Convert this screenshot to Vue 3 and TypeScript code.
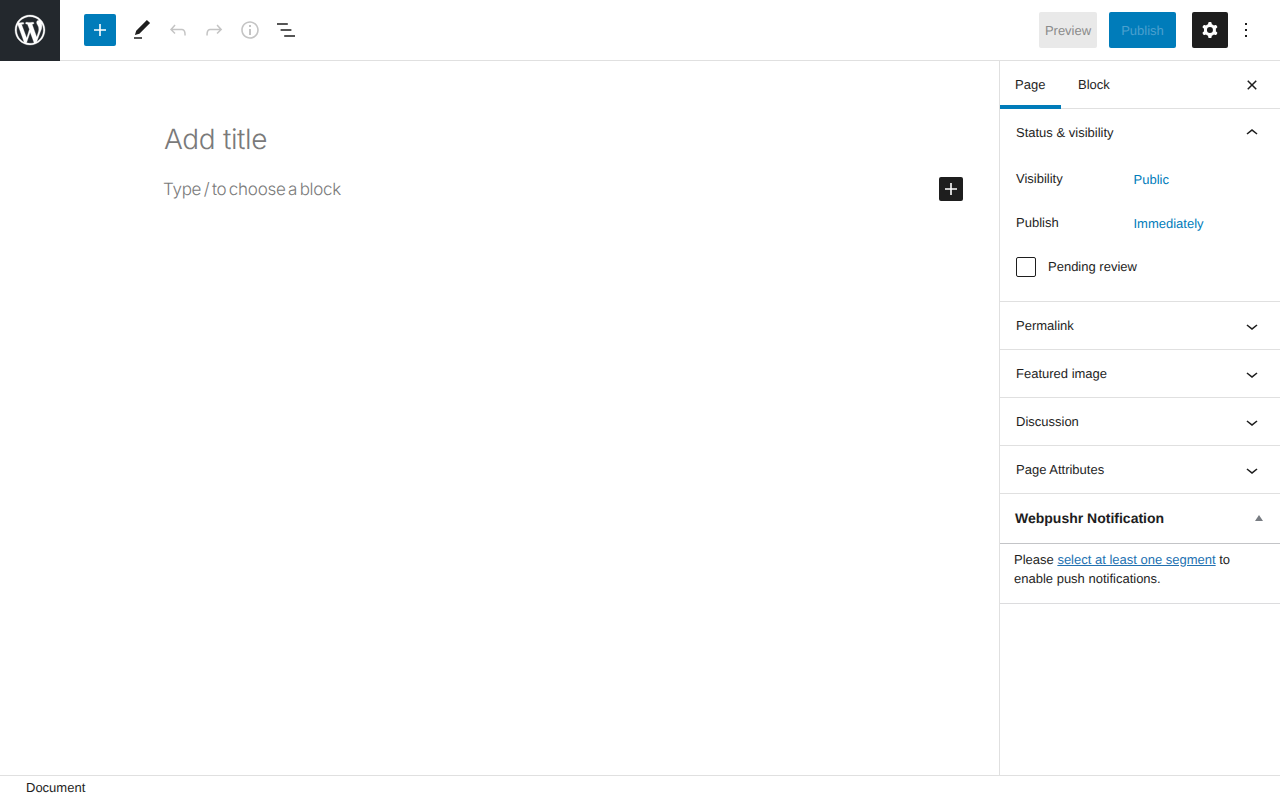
<script setup lang="ts">
const collapsed = ['Permalink', 'Featured image', 'Discussion', 'Page Attributes']
</script>

<template>
  <div class="page">
    <header class="topbar">
      <div class="logo">
        <svg width="36" height="36" viewBox="-2 -2 24 24" fill="#fff" stroke="#fff" stroke-width="0.2"><path d="M20 10c0-5.51-4.49-10-10-10C4.48 0 0 4.49 0 10c0 5.52 4.48 10 10 10 5.51 0 10-4.48 10-10zM7.78 15.37L4.37 6.22c.55-.02 1.17-.08 1.17-.08.5-.06.44-1.13-.06-1.11 0 0-1.45.11-2.37.11-.18 0-.37 0-.58-.01C4.12 2.69 6.87 1.11 10 1.11c2.33 0 4.45.87 6.05 2.34-.68-.11-1.65.39-1.65 1.58 0 .74.45 1.36.9 2.1.35.61.55 1.36.55 2.46 0 1.49-1.4 5-1.4 5l-3.03-8.37c.54-.02.82-.17.82-.17.5-.05.44-1.25-.06-1.22 0 0-1.44.12-2.38.12-.87 0-2.33-.12-2.33-.12-.5-.03-.56 1.2-.06 1.22l.92.08 1.26 3.41zM17.41 10c.24-.64.74-1.87.43-4.25.7 1.29 1.05 2.71 1.05 4.25 0 3.29-1.73 6.24-4.4 7.78.97-2.59 1.94-5.2 2.92-7.78zM6.1 18.09C3.12 16.65 1.11 13.53 1.11 10c0-1.3.23-2.48.72-3.59C3.25 10.3 4.67 14.2 6.1 18.09zm4.03-6.63l2.58 6.98c-.86.29-1.76.45-2.71.45-.79 0-1.57-.11-2.29-.33.81-2.38 1.62-4.74 2.42-7.1z"/></svg>
      </div>
      <div class="tools">
        <div class="add-btn">
          <svg width="24" height="24" viewBox="0 0 24 24" fill="#fff"><path d="M18 11.2h-5.2V6h-1.6v5.2H6v1.6h5.2V18h1.6v-5.2H18z"/></svg>
        </div>
        <svg class="tool" width="24" height="24" viewBox="0 0 24 24" fill="#1e1e1e"><path d="M20.1 5.1L16.9 2 6.2 12.7l-1.3 4.4 4.5-1.3L20.1 5.1zM4 20.8h8v-1.5H4v1.5z"/></svg>
        <svg class="tool" width="24" height="24" viewBox="0 0 24 24" fill="#c4c4c4"><path d="M18.3 11.7c-.6-.6-1.4-.9-2.3-.9H6.7l2.9-3.3-1.1-1-4.5 5L8.5 16l1-1-2.7-2.7H16c.5 0 .9.2 1.3.5 1 1 1 3.4 1 4.5v.3h1.5v-.2c0-1.5 0-4.3-1.5-5.7z"/></svg>
        <svg class="tool" width="24" height="24" viewBox="0 0 24 24" fill="#c4c4c4"><path d="M15.6 6.5l-1.1 1 2.9 3.3H8c-.9 0-1.7.3-2.3.9-1.4 1.5-1.4 4.2-1.4 5.6v.2h1.5v-.3c0-1.1 0-3.5 1-4.5.3-.3.7-.5 1.3-.5h9.2L14.5 15l1.1 1.1 4.6-4.6-4.6-5z"/></svg>
        <svg class="tool" width="24" height="24" viewBox="0 0 24 24" fill="#c4c4c4"><path d="M12 3.2c-4.8 0-8.8 3.9-8.8 8.8 0 4.8 3.9 8.8 8.8 8.8 4.8 0 8.8-3.9 8.8-8.8 0-4.8-4-8.8-8.8-8.8zm0 16c-4 0-7.2-3.3-7.2-7.2C4.8 8 8 4.8 12 4.8s7.2 3.3 7.2 7.2c0 4-3.2 7.2-7.2 7.2zM11 17h2v-6h-2v6zm0-8h2V7h-2v2z"/></svg>
        <svg class="tool" width="24" height="24" viewBox="0 0 24 24" fill="#1e1e1e"><path d="M13.8 5.2H3v1.5h10.8V5.2zm-3.6 12v1.5H21v-1.5H10.2zm-3.6-6v1.5h10.8v-1.5H6.6z"/></svg>
      </div>
      <div class="actions">
        <div class="btn preview">Preview</div>
        <div class="btn publish">Publish</div>
        <div class="btn gear">
          <svg width="24" height="24" viewBox="0 0 24 24" fill="#fff"><path fill-rule="evenodd" d="M10.289 4.836A1 1 0 0 1 11.275 4h1.306a1 1 0 0 1 .987.836l.244 1.466c.787.26 1.503.679 2.108 1.218l1.393-.522a1 1 0 0 1 1.216.437l.653 1.13a1 1 0 0 1-.23 1.273l-1.148.944a6.025 6.025 0 0 1 0 2.435l1.149.946a1 1 0 0 1 .23 1.272l-.653 1.13a1 1 0 0 1-1.216.437l-1.394-.522c-.605.54-1.32.958-2.108 1.218l-.244 1.466a1 1 0 0 1-.987.836h-1.306a1 1 0 0 1-.986-.836l-.244-1.466a5.995 5.995 0 0 1-2.108-1.218l-1.394.522a1 1 0 0 1-1.217-.436l-.653-1.131a1 1 0 0 1 .23-1.272l1.149-.946a6.026 6.026 0 0 1 0-2.435l-1.148-.944a1 1 0 0 1-.23-1.272l.653-1.131a1 1 0 0 1 1.217-.437l1.393.522a5.994 5.994 0 0 1 2.108-1.218l.244-1.466ZM14.929 12a3 3 0 1 1-6 0 3 3 0 0 1 6 0Z"/></svg>
        </div>
        <svg class="more" width="24" height="24" viewBox="0 0 24 24" fill="#1e1e1e"><path d="M13 19h-2v-2h2v2zm0-6h-2v-2h2v2zm0-6h-2V5h2v2z"/></svg>
      </div>
    </header>

    <div class="main">
      <section class="editor">
        <h1 class="title">Add title</h1>
        <div class="block-row">
          <p class="placeholder">Type / to choose a block</p>
          <div class="inline-add">
            <svg width="24" height="24" viewBox="0 0 24 24" fill="#fff"><path d="M18 11.2h-5.2V6h-1.6v5.2H6v1.6h5.2V18h1.6v-5.2H18z"/></svg>
          </div>
        </div>
      </section>

      <aside class="sidebar">
        <div class="tabs">
          <div class="tab active">Page</div>
          <div class="tab">Block</div>
          <svg class="close" width="24" height="24" viewBox="0 0 24 24" fill="#1e1e1e"><path d="M12 13.06l3.712 3.713 1.061-1.06L13.061 12l3.712-3.712-1.06-1.06L12 10.938 8.288 7.227l-1.061 1.06L10.939 12l-3.712 3.712 1.06 1.061L12 13.061z"/></svg>
        </div>

        <div class="panel status">
          <div class="panel-head">
            <span>Status &amp; visibility</span>
            <svg width="24" height="24" viewBox="0 0 24 24" fill="#1e1e1e"><path d="M6.5 12.4L12 8l5.5 4.4-.9 1.2L12 10l-4.5 3.6-1-1.2z"/></svg>
          </div>
          <div class="status-body">
            <div class="row"><span class="label">Visibility</span><span class="value">Public</span></div>
            <div class="row"><span class="label">Publish</span><span class="value">Immediately</span></div>
            <div class="check-row"><span class="check"></span><span class="check-label">Pending review</span></div>
          </div>
        </div>

        <div v-for="name in collapsed" :key="name" class="panel">
          <div class="panel-head">
            <span>{{ name }}</span>
            <svg width="24" height="24" viewBox="0 0 24 24" fill="#1e1e1e"><path d="M17.5 11.6L12 16l-5.5-4.4.9-1.2L12 14l4.5-3.6 1 1.2z"/></svg>
          </div>
        </div>

        <div class="meta-head">
          <h2>Webpushr Notification</h2>
          <span class="triangle"></span>
        </div>
        <div class="meta-body">
          <div>Please <a>select at least one segment</a> to</div>
          <div>enable push notifications.</div>
        </div>
      </aside>
    </div>

    <footer class="footer">Document</footer>
  </div>
</template>

<style scoped>
.page {
  height: 800px;
  display: flex;
  flex-direction: column;
  background: #fff;
  color: #1e1e1e;
  font-family: "Liberation Sans", Arial, sans-serif;
  font-size: 13px;
  overflow: hidden;
  text-rendering: geometricPrecision;
}
.topbar {
  height: 61px;
  flex: none;
  box-sizing: border-box;
  border-bottom: 1px solid #e0e0e0;
  display: flex;
  align-items: flex-start;
}
.logo {
  width: 60px;
  height: 61px;
  background: #23282d;
  display: flex;
  align-items: center;
  justify-content: center;
  padding-bottom: 1px;
  box-sizing: border-box;
}
.tools {
  display: flex;
  align-items: center;
  height: 60px;
  padding-left: 24px;
}
.add-btn {
  width: 32px;
  height: 32px;
  background: #007cba;
  border-radius: 2px;
  display: flex;
  align-items: center;
  justify-content: center;
  margin-right: 14px;
}
.tool {
  margin-right: 12px;
}
.actions {
  margin-left: auto;
  display: flex;
  align-items: center;
  height: 60px;
  padding-right: 22px;
}
.btn {
  height: 36px;
  border-radius: 2px;
  display: flex;
  align-items: center;
  justify-content: center;
}
.preview {
  width: 58px;
  background: #e9e9e9;
  color: #8b8b8b;
  margin-right: 12px;
}
.publish {
  width: 67px;
  background: #007cba;
  color: #4ba0cf;
  margin-right: 16px;
}
.gear {
  width: 36px;
  background: #1e1e1e;
  margin-right: 6px;
}
.main {
  flex: 1;
  display: flex;
  min-height: 0;
}
.editor {
  flex: 1;
  min-width: 0;
  padding-top: 59px;
  box-sizing: border-box;
}
.title {
  margin: 0 0 0 164px;
  font-family: "Inter", "Liberation Sans", sans-serif;
  font-weight: 300;
  font-size: 28px;
  line-height: 38px;
  color: #7a7a7a;
  letter-spacing: -0.35px;
}
.block-row {
  display: flex;
  align-items: center;
  justify-content: space-between;
  margin-top: 19px;
  padding: 0 36px 0 163px;
  height: 24px;
}
.placeholder {
  margin: 2px 0 0;
  font-family: "Inter", "Liberation Sans", sans-serif;
  font-weight: 300;
  font-size: 17px;
  line-height: 24px;
  color: #7a7a7a;
  letter-spacing: -0.27px;
  word-spacing: -2px;
}
.inline-add {
  width: 24px;
  height: 24px;
  background: #1e1e1e;
  border-radius: 2px;
}
.sidebar {
  width: 281px;
  flex: none;
  box-sizing: border-box;
  border-left: 1px solid #e0e0e0;
  height: 100%;
}
.tabs {
  height: 48px;
  box-sizing: border-box;
  border-bottom: 1px solid #e0e0e0;
  display: flex;
  align-items: stretch;
}
.tab {
  height: 48px;
  box-sizing: border-box;
  padding: 0 17px;
  line-height: 47px;
}
.tab:first-child {
  width: 61px;
  padding: 0 0 0 15px;
}
.tab.active {
  border-bottom: 4px solid #007cba;
}
.close {
  margin: 12px 16px 0 auto;
}
.panel {
  height: 48px;
  box-sizing: border-box;
  border-bottom: 1px solid #e0e0e0;
}
.panel.status {
  height: 193px;
}
.panel-head {
  height: 47px;
  display: flex;
  align-items: center;
  justify-content: space-between;
  padding: 0 16px;
}
.status-body {
  padding: 1px 16px 0;
}
.row {
  height: 44px;
  display: flex;
}
.label {
  width: 117.5px;
  line-height: 44px;
}
.value {
  color: #007cba;
  line-height: 46px;
}
.check-row {
  display: flex;
  align-items: center;
  gap: 12px;
  height: 20px;
  margin-top: 12px;
}
.check {
  width: 20px;
  height: 20px;
  box-sizing: border-box;
  border: 1px solid #1e1e1e;
  border-radius: 2px;
}
.check-label {
  line-height: 20px;
}
.meta-head {
  height: 50px;
  box-sizing: border-box;
  border-bottom: 1px solid #c3c4c7;
  display: flex;
  align-items: center;
  justify-content: space-between;
  padding: 0 17px 2px 15px;
}
.meta-head h2 {
  margin: 0;
  font-size: 14px;
  font-weight: 700;
}
.triangle {
  width: 0;
  height: 0;
  border-left: 4px solid transparent;
  border-right: 4px solid transparent;
  border-bottom: 6px solid #787c82;
}
.meta-body {
  height: 60px;
  box-sizing: border-box;
  border-bottom: 1px solid #dcdcde;
  padding: 6px 14px 0;
  line-height: 19px;
}
.meta-body a {
  color: #2271b1;
  text-decoration: underline;
}
.footer {
  height: 25px;
  flex: none;
  box-sizing: border-box;
  border-top: 1px solid #e0e0e0;
  padding-left: 26px;
  line-height: 23px;
}
</style>
